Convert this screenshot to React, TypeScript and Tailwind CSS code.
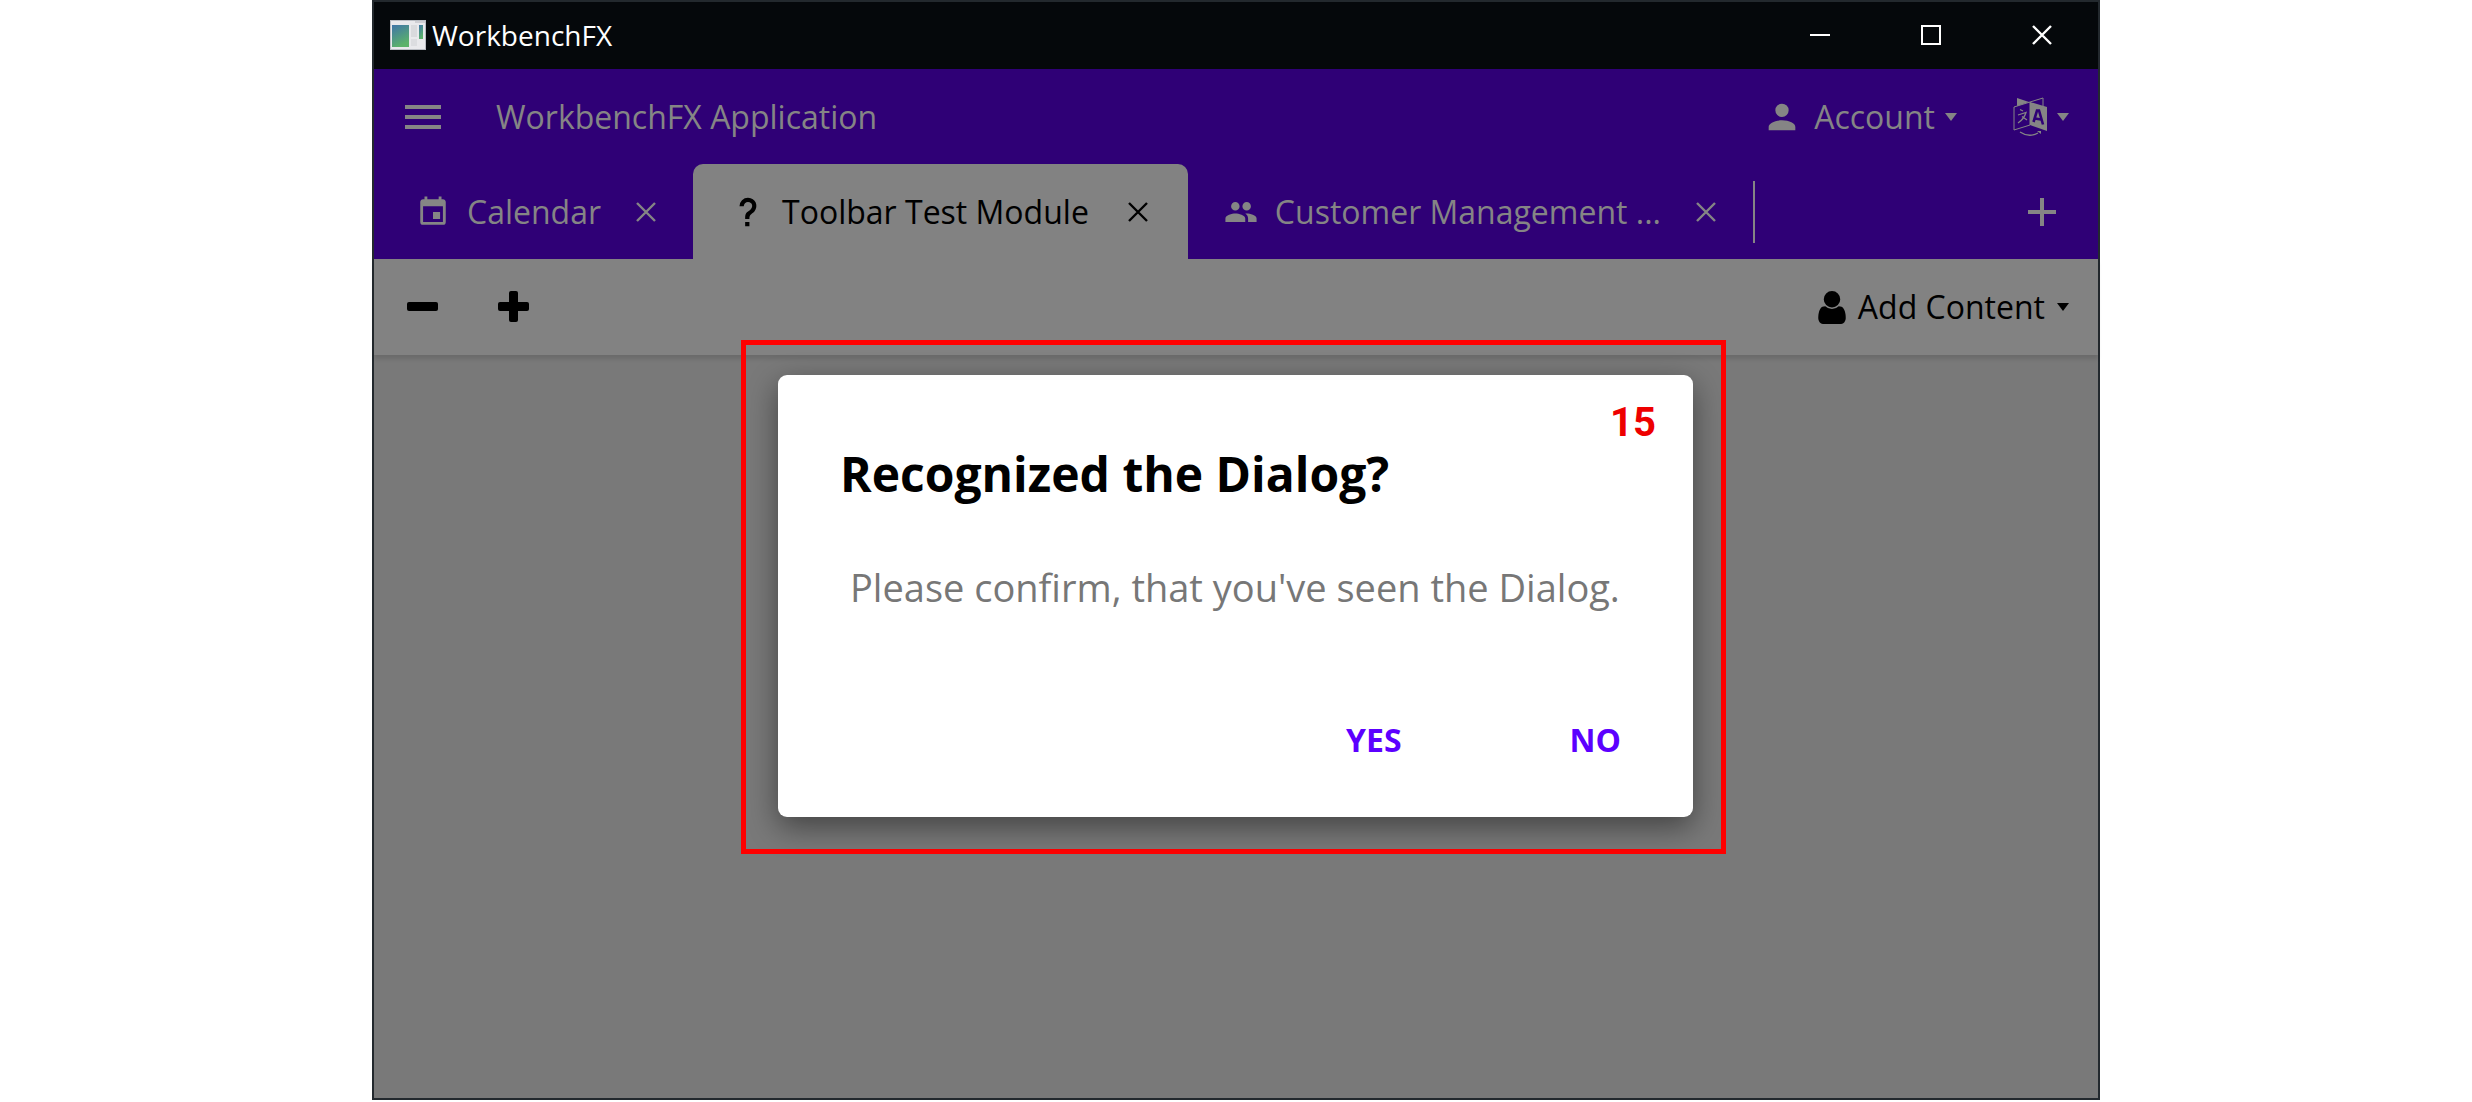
import type { ReactNode } from "react";

type IconProps = { d: string; className: string; viewBox?: string };

function Icon({ d, className, viewBox = "0 0 24 24" }: IconProps) {
  return (
    <svg viewBox={viewBox} className={"shrink-0 " + className} fill="currentColor" aria-hidden="true">
      <path d={d} />
    </svg>
  );
}

const CALENDAR =
  "M19,19H5V8H19M16,1V3H8V1H6V3H5C3.89,3 3,3.89 3,5V19A2,2 0 0,0 5,21H19A2,2 0 0,0 21,19V5C21,3.89 20.1,3 19,3H18V1M17,12H12V17H17V12Z";
const HELP =
  "M10,19H13V22H10V19M12,2C17.35,2.22 19.68,7.62 16.5,11.67C15.67,12.67 14.33,13.33 13.67,14.17C13,15 13,16 13,17H10C10,15.33 10,13.92 10.67,12.92C11.33,11.92 12.67,11.33 13.5,10.67C15.92,8.43 15.32,5.26 12,5A3,3 0 0,0 9,8H6A6,6 0 0,1 12,2Z";
const PEOPLE =
  "M16,13C15.71,13 15.38,13 15.03,13.05C16.19,13.89 17,15 17,16.5V19H23V16.5C23,14.17 18.33,13 16,13M8,13C5.67,13 1,14.17 1,16.5V19H15V16.5C15,14.17 10.33,13 8,13M8,11A3,3 0 0,0 11,8A3,3 0 0,0 8,5A3,3 0 0,0 5,8A3,3 0 0,0 8,11M16,11A3,3 0 0,0 19,8A3,3 0 0,0 16,5A3,3 0 0,0 13,8A3,3 0 0,0 16,11Z";
const PERSON =
  "M12,4A4,4 0 0,1 16,8A4,4 0 0,1 12,12A4,4 0 0,1 8,8A4,4 0 0,1 12,4M12,14C16.42,14 20,15.79 20,18V20H4V18C4,15.79 7.58,14 12,14Z";
const MENU = "M3,6H21V8H3V6M3,11H21V13H3V11M3,16H21V18H3V16Z";
const PLUS = "M19,13H13V19H11V13H5V11H11V5H13V11H19V13Z";
const USER =
  "M1280 1399q0 109-62.5 187t-150.5 78h-854q-88 0-150.5-78t-62.5-187q0-85 8.5-160.5t31.5-152 58.5-131 94-89 134.5-34.5q131 128 313 128t313-128q76 0 134.5 34.5t94 89 58.5 131 31.5 152 8.5 160.5zm-256-887q0 159-112.5 271.5t-271.5 112.5-271.5-112.5-112.5-271.5 112.5-271.5 271.5-112.5 271.5 112.5 112.5 271.5z";

function Cross() {
  return (
    <svg viewBox="0 0 20 20" className="size-5 shrink-0" fill="none" stroke="currentColor" strokeWidth="2.400" aria-hidden="true">
      <path d="M1 1 19 19M19 1 1 19" />
    </svg>
  );
}

function Caret() {
  return (
    <svg viewBox="0 0 12 8" className="h-2 w-3 shrink-0" fill="currentColor" aria-hidden="true">
      <path d="M0 0H12L6 8Z" />
    </svg>
  );
}

function AppIcon() {
  return (
    <svg viewBox="0 0 36 30" className="h-[30px] w-9 shrink-0" aria-hidden="true">
      <defs>
        <linearGradient id="pane" x1="0" y1="0" x2="0.4" y2="1">
          <stop offset="0" stopColor="#3f74a8" />
          <stop offset="1" stopColor="#5cb36a" />
        </linearGradient>
      </defs>
      <rect width="36" height="30" fill="#e9e9ec" />
      <rect x="0.5" y="0.5" width="35" height="29" fill="none" stroke="#b9bcc2" />
      <rect x="2" y="5" width="17" height="22" fill="url(#pane)" />
      <rect x="21" y="5" width="6" height="12" fill="#d9dadd" />
      <rect x="21" y="19" width="6" height="7" fill="#dcdde0" />
      <rect x="29" y="5" width="4" height="14" fill="url(#pane)" />
      <rect x="25" y="1" width="10" height="2" fill="#cfcfd4" />
    </svg>
  );
}

function LanguageIcon() {
  return (
    <svg viewBox="0 0 34 39" className="h-[39px] w-[34px] shrink-0" fill="none" stroke="currentColor" aria-hidden="true">
      <path d="M4 1 16 5 4 9Z" fill="currentColor" stroke="none" />
      <path d="M17 5 30 1V9" />
      <path d="M1 10 17 5V28L1 33Z" />
      <path d="M17 5 34 10V34L17 28Z" fill="currentColor" stroke="none" />
      <path d="M20.500 25 24 13.500H26L30 27.500M22 21.500 28 22.500" stroke="#2f0076" strokeWidth="2.600" />
      <path d="M7 12.500 10 14M5 18 13 15.500Q11 22 5 26M9 19.500 14 23" strokeWidth="1.300" />
      <path d="M7 35Q16 41 25 36" strokeWidth="1.300" />
      <path d="M24 34H28V37Z" fill="currentColor" stroke="none" />
    </svg>
  );
}

function Tab({ icon, label, className }: { icon: ReactNode; label: string; className: string }) {
  return (
    <div className={"flex h-full items-center " + className}>
      <button type="button" role="tab" className="flex items-center gap-[17px] whitespace-nowrap">
        {icon}
        {label}
      </button>
      <button type="button" aria-label={"Close " + label}>
        <Cross />
      </button>
    </div>
  );
}

export default function App() {
  return (
    <div className="h-screen overflow-hidden bg-white px-[372px] pb-[2px] font-['Open_Sans','Noto_Sans',sans-serif]">
      <div className="relative flex h-full flex-col border-2 border-[#23292e] bg-[#797979]">
        <header className="flex h-[67px] shrink-0 items-center bg-[#05080b] pb-0.5 pl-4 text-white">
          <AppIcon />
          <span className="grow pl-1.5 text-[28px] leading-[36px]">WorkbenchFX</span>
          <div className="flex items-center gap-[91px] pr-[46px]">
            <button type="button" aria-label="Minimize" className="flex h-5 w-5 items-center">
              <span className="h-0.5 w-full bg-white" />
            </button>
            <button type="button" aria-label="Maximize" className="size-5 border-2 border-white" />
            <button type="button" aria-label="Close">
              <Cross />
            </button>
          </div>
        </header>

        <div className="shrink-0 bg-[#2f0076] text-[32px] leading-[40px] text-[#858585]">
          <div className="flex h-[95px] items-center pr-[29px] pl-[25px]">
            <button type="button" aria-label="Menu">
              <Icon d={MENU} className="size-12" />
            </button>
            <h1 className="grow pl-[49px]">WorkbenchFX Application</h1>
            <button type="button" className="flex items-center">
              <Icon d={PERSON} className="size-10" />
              <span className="pr-2.5 pl-3">Account</span>
              <Caret />
            </button>
            <button type="button" aria-label="Language" className="flex items-center gap-2.5 pl-14">
              <LanguageIcon />
              <Caret />
            </button>
          </div>
          <div role="tablist" className="flex h-[95px] items-center">
            <Tab
              label="Calendar"
              icon={<Icon d={CALENDAR} className="size-[34px]" />}
              className="gap-[35px] pr-[37px] pl-[42px]"
            />
            <Tab
              label="Toolbar Test Module"
              icon={<Icon d={HELP} className="size-[34px]" />}
              className="gap-[39px] rounded-t-[10px] bg-[#828282] pr-10 pl-[38px] text-black"
            />
            <Tab
              label="Customer Management ..."
              icon={<Icon d={PEOPLE} className="size-[34px]" />}
              className="gap-[35px] pr-[37px] pl-9"
            />
            <div className="h-[62px] w-0.5 bg-[#858585]" />
            <button type="button" aria-label="Add module" className="mr-8 ml-auto">
              <Icon d={PLUS} className="size-12" />
            </button>
          </div>
        </div>

        <div className="z-10 flex h-24 shrink-0 items-center bg-[#828282] pr-[29px] pl-[33px] text-[32px] leading-[40px] text-black shadow-[0_4px_4px_rgba(0,0,0,0.12)]">
          <div className="flex items-center gap-[60px] pb-0.5">
            <button type="button" aria-label="Remove" className="flex h-8 w-[31px] items-center">
              <span className="h-[9px] w-full rounded-[2px] bg-black" />
            </button>
            <button type="button" aria-label="Add">
              <svg viewBox="0 0 31 31" className="size-[31px]" aria-hidden="true">
                <rect y="11" width="31" height="9" rx="2" />
                <rect x="11" width="9" height="31" rx="2" />
              </svg>
            </button>
          </div>
          <button type="button" className="ml-auto flex items-center">
            <Icon d={USER} viewBox="0 128 1280 1536" className="h-[33px] w-7" />
            <span className="px-3">Add Content</span>
            <Caret />
          </button>
        </div>

        <div className="absolute inset-0 z-20 flex items-start justify-center pt-[338px] pr-[5px]">
          <div className="border-[5px] border-[#ff0000] pt-[30px] pr-7 pb-8 pl-8">
            <section
              role="dialog"
              aria-labelledby="dialog-title"
              className="relative flex h-[442px] w-[915px] flex-col rounded-[9px] bg-white pt-[67px] pr-[72px] pl-[62px] shadow-[0_10px_30px_rgba(0,0,0,0.45)]"
            >
              <span className="absolute top-[23px] right-[37px] font-['Roboto',sans-serif] text-[40px] leading-[50px] font-bold text-[#ee0000]">
                15
              </span>
              <h2 id="dialog-title" className="text-[48px] leading-[64px] font-bold whitespace-nowrap text-black">
                Recognized the Dialog?
              </h2>
              <p className="pt-14 pl-2.5 text-[38px] leading-[50px] whitespace-nowrap text-[#777777]">
                Please confirm, that you've seen the Dialog.
              </p>
              <div className="mt-auto flex justify-end gap-[168px] pb-[57px] text-[32px] leading-[40px] font-bold text-[#5c00ff]">
                <button type="button">YES</button>
                <button type="button">NO</button>
              </div>
            </section>
          </div>
        </div>
      </div>
    </div>
  );
}
